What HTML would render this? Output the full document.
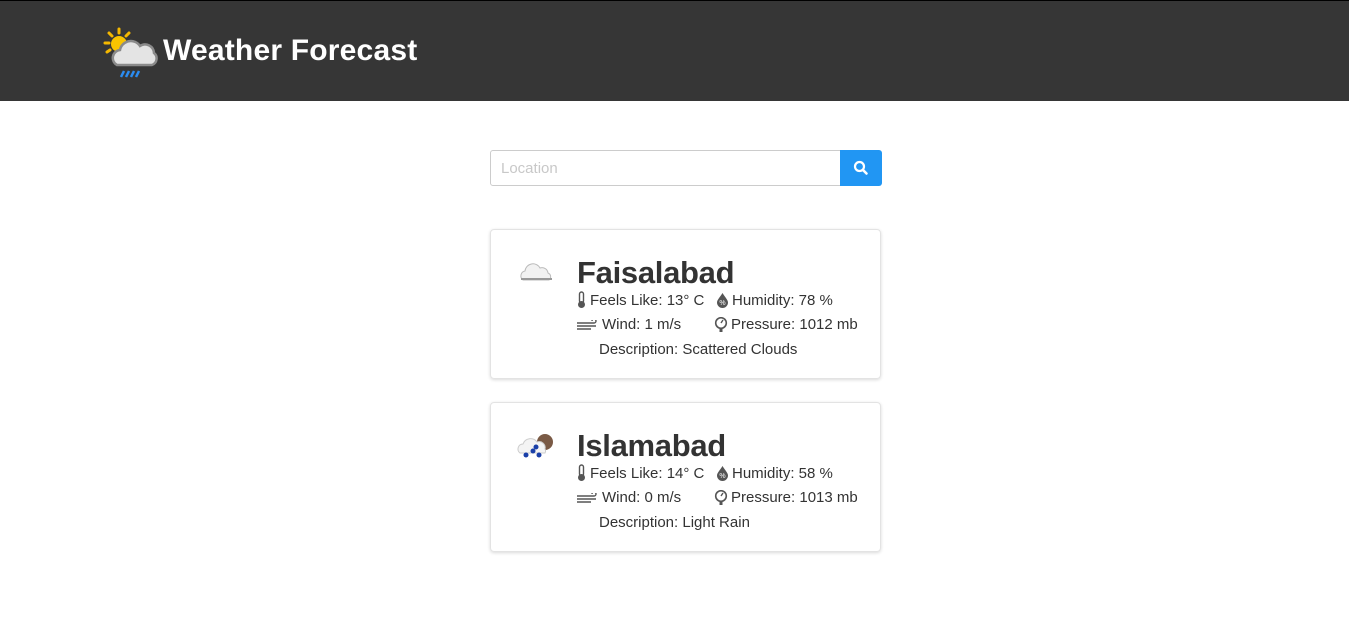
<!DOCTYPE html>
<html><head><style>
body{margin:0;font-family:"Liberation Sans",sans-serif;background:#fff;color:#333;}
.hdr{height:100px;background:#363636;border-top:1px solid #000;position:relative}
.hdr .t{position:absolute;left:163px;top:33px;color:#fff;font-size:30px;font-weight:bold;letter-spacing:0.2px}
.hdr svg{position:absolute;left:103px;top:26px}
.search{position:absolute;left:490px;top:150px;width:392px;height:36px}
.search .in{position:absolute;left:0;top:0;height:34px;border:1px solid #ccc;border-radius:3px 0 0 3px;font-size:15px;color:#c8c8c8;line-height:36px;padding-left:10px;width:339px}
.search .bt{position:absolute;left:350px;top:0;width:42px;height:36px;background:#2196f3;border-radius:0 3px 3px 0}
.card{position:absolute;left:490px;width:389px;height:148px;border:1px solid #e3e3e3;border-radius:4px;box-shadow:0 1px 3px rgba(0,0,0,.15)}
.card .n{position:absolute;left:86px;top:25px;font-size:31px;font-weight:bold;color:#333;letter-spacing:-0.3px}
.r{position:absolute;font-size:15px;color:#333;white-space:nowrap}
.i{position:absolute}
</style></head><body>
<div class="hdr">
<svg width="56" height="52" viewBox="0 0 56 52">
<g stroke="#f5b800" stroke-width="3" stroke-linecap="round"><line x1="16" y1="2" x2="16" y2="6"/><line x1="6" y1="6" x2="9" y2="9"/><line x1="26" y1="6" x2="23" y2="9"/><line x1="2" y1="16" x2="6" y2="16"/><line x1="4" y1="25" x2="7" y2="23"/></g>
<circle cx="16" cy="17" r="8" fill="#f9c400"/>
<path d="M14 38 a8 8 0 0 1 3-15 a11 11 0 0 1 20-4 a9 9 0 0 1 14 7 a7 7 0 0 1-2 12z" fill="#e4e4e4" stroke="#8a8a8a" stroke-width="2.5"/>
<g stroke="#2b8cf0" stroke-width="2.5"><line x1="18" y1="50" x2="21" y2="44"/><line x1="23" y1="50" x2="26" y2="44"/><line x1="28" y1="50" x2="31" y2="44"/><line x1="33" y1="50" x2="36" y2="44"/></g>
</svg>
<div class="t">Weather Forecast</div>
</div>
<div class="search"><div class="in">Location</div><div class="bt">
<svg width="42" height="36" viewBox="0 0 42 36"><circle cx="19.5" cy="16.5" r="4.5" fill="none" stroke="#fff" stroke-width="2.2"/><line x1="23" y1="20" x2="26.5" y2="23.5" stroke="#fff" stroke-width="2.6" stroke-linecap="round"/></svg></div></div>

<div class="card" style="top:229px">
<svg style="position:absolute;left:27px;top:30px" width="36" height="22" viewBox="0 0 36 22"><path d="M5 20 a5 5 0 0 1 2-9 a8 8 0 0 1 15-3 a6 6 0 0 1 8 5 a4 4 0 0 1 1 7z" fill="#f2f2f2" stroke="#bbb" stroke-width="1"/><path d="M3 18 h31 v2 h-31z" fill="#999"/></svg>
<div class="n">Faisalabad</div>
<svg class="i" style="left:86px;top:61px" width="9" height="18" viewBox="0 0 9 18"><rect x="2.5" y="1" width="4" height="11" rx="2" fill="none" stroke="#555" stroke-width="1.4"/><circle cx="4.5" cy="13.5" r="3.5" fill="#555"/></svg>
<div class="r" style="left:99px;top:62px">Feels Like: 13° C</div>
<svg class="i" style="left:225px;top:62px" width="13" height="16" viewBox="0 0 13 16"><path d="M6.5 1 C4 5 1 8 1 10.5 a5.5 5.5 0 0 0 11 0 C12 8 9 5 6.5 1z" fill="#555"/><text x="6.5" y="13" font-size="7" fill="#fff" text-anchor="middle" font-family="Liberation Sans">%</text></svg>
<div class="r" style="left:241px;top:62px">Humidity: 78 %</div>
<svg class="i" style="left:86px;top:90px" width="22" height="10" viewBox="0 0 22 10"><path d="M0 3 h17 a2 2 0 1 0-2-2 M0 6 h19 M0 9 h14" fill="none" stroke="#555" stroke-width="1.4"/></svg>
<div class="r" style="left:111px;top:86px">Wind: 1 m/s</div>
<svg class="i" style="left:223px;top:87px" width="14" height="15" viewBox="0 0 14 15"><circle cx="7" cy="6" r="5.3" fill="none" stroke="#555" stroke-width="1.6"/><line x1="7" y1="6" x2="9" y2="3" stroke="#555" stroke-width="1.4"/><rect x="5.5" y="11" width="3" height="4" fill="#555"/></svg>
<div class="r" style="left:240px;top:86px">Pressure: 1012 mb</div>
<div class="r" style="left:108px;top:111px">Description: Scattered Clouds</div>
</div>

<div class="card" style="top:402px">
<svg style="position:absolute;left:25px;top:28px" width="40" height="32" viewBox="0 0 40 32"><circle cx="29" cy="11" r="8" fill="#7a5a45"/><path d="M4 22 a5 5 0 0 1 3-9 a8 8 0 0 1 14-2 a6 6 0 0 1 8 7 a4 4 0 0 1 0 4z" fill="#f4f4f4" stroke="#ccc"/><g fill="#1a3fa8"><circle cx="10" cy="24" r="2.5"/><circle cx="17" cy="20" r="2.5"/><circle cx="23" cy="24" r="2.5"/><circle cx="20" cy="16" r="2.5"/></g></svg>
<div class="n">Islamabad</div>
<svg class="i" style="left:86px;top:61px" width="9" height="18" viewBox="0 0 9 18"><rect x="2.5" y="1" width="4" height="11" rx="2" fill="none" stroke="#555" stroke-width="1.4"/><circle cx="4.5" cy="13.5" r="3.5" fill="#555"/></svg>
<div class="r" style="left:99px;top:62px">Feels Like: 14° C</div>
<svg class="i" style="left:225px;top:62px" width="13" height="16" viewBox="0 0 13 16"><path d="M6.5 1 C4 5 1 8 1 10.5 a5.5 5.5 0 0 0 11 0 C12 8 9 5 6.5 1z" fill="#555"/><text x="6.5" y="13" font-size="7" fill="#fff" text-anchor="middle" font-family="Liberation Sans">%</text></svg>
<div class="r" style="left:241px;top:62px">Humidity: 58 %</div>
<svg class="i" style="left:86px;top:90px" width="22" height="10" viewBox="0 0 22 10"><path d="M0 3 h17 a2 2 0 1 0-2-2 M0 6 h19 M0 9 h14" fill="none" stroke="#555" stroke-width="1.4"/></svg>
<div class="r" style="left:111px;top:86px">Wind: 0 m/s</div>
<svg class="i" style="left:223px;top:87px" width="14" height="15" viewBox="0 0 14 15"><circle cx="7" cy="6" r="5.3" fill="none" stroke="#555" stroke-width="1.6"/><line x1="7" y1="6" x2="9" y2="3" stroke="#555" stroke-width="1.4"/><rect x="5.5" y="11" width="3" height="4" fill="#555"/></svg>
<div class="r" style="left:240px;top:86px">Pressure: 1013 mb</div>
<div class="r" style="left:108px;top:111px">Description: Light Rain</div>
</div>
</body></html>
